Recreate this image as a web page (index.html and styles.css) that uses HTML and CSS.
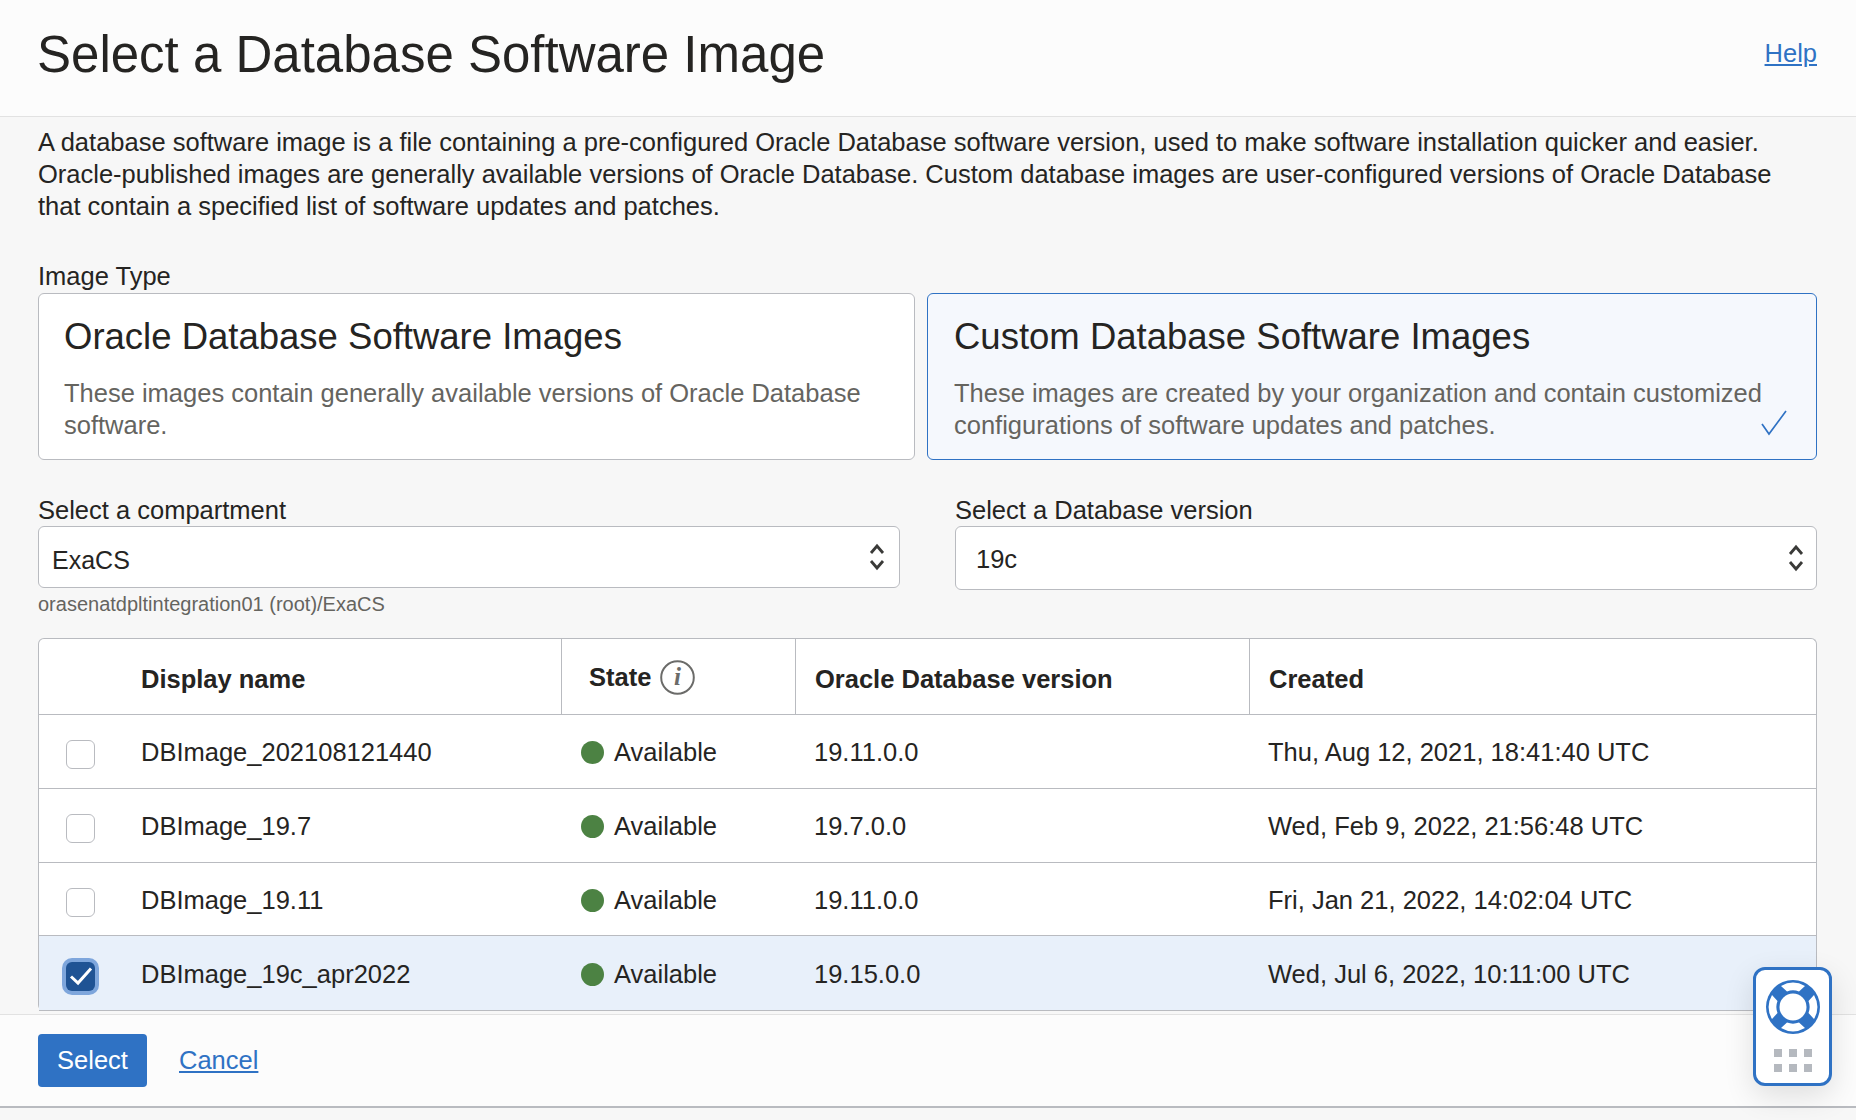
FILE: index.html
```html
<!DOCTYPE html>
<html lang="en">
<head>
<meta charset="utf-8">
<title>Select a Database Software Image</title>
<link rel="stylesheet" href="styles.css">
</head>
<body>
<div class="panel">
  <header class="head">
    <h1 class="title">Select a Database Software Image</h1>
    <a class="link help" href="#">Help</a>
  </header>
  <main class="content">
    <p class="intro">A database software image is a file containing a pre-configured Oracle Database software version, used to make software installation quicker and easier. Oracle-published images are generally available versions of Oracle Database. Custom database images are user-configured versions of Oracle Database that contain a specified list of software updates and patches.</p>
    <div class="label type-label">Image Type</div>
    <div class="cards">
      <div class="card">
        <div class="card-title">Oracle Database Software Images</div>
        <div class="card-text">These images contain generally available versions of Oracle Database software.</div>
      </div>
      <div class="card card-on">
        <div class="card-title">Custom Database Software Images</div>
        <div class="card-text">These images are created by your organization and contain customized configurations of software updates and patches.</div>
        <svg class="card-check" width="28" height="26" viewBox="0 0 28 26"><path d="M2 14 L9 24 L26 1" fill="none" stroke="#2f72c4" stroke-width="1.7"/></svg>
      </div>
    </div>
    <div class="fields">
      <div class="field">
        <div class="label">Select a compartment</div>
        <div class="select select-a"><span class="select-value">ExaCS</span>
          <svg class="updown" width="16" height="28" viewBox="0 0 16 28"><path d="M2 10 L8 3 L14 10 M2 18 L8 25 L14 18" fill="none" stroke="#3a3a38" stroke-width="2.8"/></svg>
        </div>
        <div class="hint">orasenatdpltintegration01 (root)/ExaCS</div>
      </div>
      <div class="field">
        <div class="label">Select a Database version</div>
        <div class="select select-b"><span class="select-value-b">19c</span>
          <svg class="updown" width="16" height="28" viewBox="0 0 16 28"><path d="M2 10 L8 3 L14 10 M2 18 L8 25 L14 18" fill="none" stroke="#3a3a38" stroke-width="2.8"/></svg>
        </div>
      </div>
    </div>
    <table class="grid">
      <colgroup><col class="c1"><col class="c2"><col class="c3"><col class="c4"><col></colgroup>
      <thead>
        <tr>
          <th></th>
          <th>Display name</th>
          <th class="state-h"><span class="state-wrap">State
            <svg class="info" width="35" height="35" viewBox="0 0 35 35"><circle cx="17.5" cy="17.5" r="16.3" fill="none" stroke="#6b6b69" stroke-width="2"/><text x="17.5" y="25" text-anchor="middle" class="info-i">i</text></svg></span></th>
          <th>Oracle Database version</th>
          <th class="created-h">Created</th>
        </tr>
      </thead>
      <tbody>
        <tr>
          <td class="cb-cell"><span class="cb"></span></td>
          <td>DBImage_202108121440</td>
          <td><span class="status"><i class="dot"></i>Available</span></td>
          <td>19.11.0.0</td>
          <td>Thu, Aug 12, 2021, 18:41:40 UTC</td>
        </tr>
        <tr>
          <td class="cb-cell"><span class="cb"></span></td>
          <td>DBImage_19.7</td>
          <td><span class="status"><i class="dot"></i>Available</span></td>
          <td>19.7.0.0</td>
          <td>Wed, Feb 9, 2022, 21:56:48 UTC</td>
        </tr>
        <tr class="row-short">
          <td class="cb-cell"><span class="cb"></span></td>
          <td>DBImage_19.11</td>
          <td><span class="status"><i class="dot"></i>Available</span></td>
          <td>19.11.0.0</td>
          <td>Fri, Jan 21, 2022, 14:02:04 UTC</td>
        </tr>
        <tr class="row-on">
          <td class="cb-cell"><span class="cb cb-on"><svg width="24" height="24" viewBox="0 0 24 24"><path d="M2 12.5 L9 19 L22 4.5" fill="none" stroke="#fff" stroke-width="3"/></svg></span></td>
          <td>DBImage_19c_apr2022</td>
          <td><span class="status"><i class="dot"></i>Available</span></td>
          <td>19.15.0.0</td>
          <td>Wed, Jul 6, 2022, 10:11:00 UTC</td>
        </tr>
      </tbody>
    </table>
  </main>
  <footer class="foot">
    <button class="btn">Select</button>
    <a class="link cancel" href="#">Cancel</a>
  </footer>
</div>
<aside class="widget">
  <svg width="56" height="56" viewBox="0 0 56 56">
    <circle cx="28" cy="28" r="27" fill="#2f72c4"/>
    <g fill="#fff">
      <path d="M16 7 A24.2 24.2 0 0 1 40 7 L34 12.5 A16.6 16.6 0 0 0 22 12.5 Z"/>
      <path d="M16 7 A24.2 24.2 0 0 1 40 7 L34 12.5 A16.6 16.6 0 0 0 22 12.5 Z" transform="rotate(90 28 28)"/>
      <path d="M16 7 A24.2 24.2 0 0 1 40 7 L34 12.5 A16.6 16.6 0 0 0 22 12.5 Z" transform="rotate(180 28 28)"/>
      <path d="M16 7 A24.2 24.2 0 0 1 40 7 L34 12.5 A16.6 16.6 0 0 0 22 12.5 Z" transform="rotate(270 28 28)"/>
      <circle cx="28" cy="28" r="13.5"/>
    </g>
  </svg>
  <div class="dots"><i></i><i></i><i></i><i></i><i></i><i></i></div>
</aside>
</body>
</html>
```
FILE: styles.css
```css
* { box-sizing: border-box; }
html, body { margin: 0; height: 100%; }
body { background: #f7f7f7; color: #252422; font-family: "Liberation Sans", Arial, sans-serif; overflow: hidden; position: relative; }
.panel { display: flex; flex-direction: column; height: 1108px; border-bottom: 2px solid #b9bbc0; }
.head { height: 117px; background: #fcfcfc; border-bottom: 1px solid #e2e2e2; display: flex; justify-content: space-between; padding: 26px 39px 0 37px; }
.title { margin: 0; font-size: 51px; line-height: 58px; font-weight: 400; }
.link { color: #2f72c4; text-decoration: underline; font-size: 25.5px; }
.help { margin-top: 13px; }
.content { flex: 1; padding: 9px 39px 0 38px; }
.intro { margin: 0; font-size: 25.5px; line-height: 32px; }
.label { font-size: 25.5px; line-height: 32px; }
.type-label { margin-top: 38px; }
.cards { display: flex; gap: 12px; margin-top: 1px; }
.card { height: 167px; padding: 21px 26px 0; background: #fff; border: 1px solid #b9bbc0; border-radius: 6px; position: relative; }
.card:first-child { width: 877px; padding-left: 25px; }
.card-on { width: 890px; background: #f5f8fd; border-color: #2f72c4; }
.card-title { font-size: 36.5px; line-height: 44px; }
.card-text { margin-top: 18px; font-size: 25.5px; line-height: 32px; color: #65645f; }
.card-check { position: absolute; right: 28px; bottom: 23px; }
.fields { display: flex; justify-content: space-between; margin-top: 34px; }
.field { width: 862px; }
.select { background: #fff; border: 1px solid #b9bbc0; border-radius: 6px; display: flex; align-items: center; justify-content: space-between; font-size: 25.5px; }
.select-a { height: 62px; padding: 0 14px 0 13px; }
.select-value { padding-top: 6px; font-size: 25px; }
.select-b { height: 64px; padding: 0 12px 0 20px; }
.select-value-b { padding-top: 2px; }
.hint { margin-top: 3px; font-size: 20px; line-height: 26px; color: #65645f; }
.grid { width: 1779px; margin: 21px 0 0; table-layout: fixed; border-collapse: separate; border-spacing: 0; background: #fff; border: 1px solid #b9bbc0; border-bottom: 0; border-radius: 6px; font-size: 25.5px; }
.c1 { width: 102px; } .c2 { width: 420px; } .c3 { width: 234px; } .c4 { width: 454px; }
.grid th { height: 76px; padding: 5px 18px 0; text-align: left; font-size: 25.5px; font-weight: 700; border-bottom: 1px solid #b9bbc0; border-left: 1px solid #b9bbc0; }
.grid th:nth-child(-n+2) { border-left: 0; }
.grid th:nth-child(2), .grid td:nth-child(2) { padding-left: 0; }
.grid td { height: 74px; padding: 2px 18px 0; border-bottom: 1px solid #b9bbc0; }
.grid .row-short td { height: 73px; }
.grid .row-on td { height: 75px; background: #e8f0fa; }
.grid td:nth-child(4), .grid th:nth-child(4), .grid td:last-child, .grid th.created-h { padding-left: 19px; }
.grid td.cb-cell { padding: 6px 0 0 27px; }
.grid th.state-h { padding: 2px 18px 0 27px; }
.state-wrap { display: inline-flex; align-items: center; gap: 9px; }
.info-i { font-family: "Liberation Serif", serif; font-style: italic; font-size: 25px; fill: #6b6b69; }
.status { display: inline-flex; align-items: center; gap: 10px; margin-left: 2px; padding-top: 3px; }
.dot { width: 23px; height: 23px; border-radius: 50%; background: #4c8243; }
.cb { display: block; width: 29px; height: 29px; border: 1px solid #b9bbc0; border-radius: 6px; background: #fff; }
.cb-on { display: flex; align-items: center; justify-content: center; background: #1f5394; border: 0; box-shadow: 0 0 0 4px #7ea6dc; }
.foot { height: 92px; background: #fcfcfc; border-top: 1px solid #e2e2e2; display: flex; align-items: center; gap: 32px; padding: 0 38px; }
.btn { width: 109px; height: 53px; border: 0; border-radius: 4px; background: #2f72c4; color: #fff; font: 25.5px "Liberation Sans", Arial, sans-serif; padding: 0; }
.widget { position: absolute; left: 1753px; top: 967px; width: 79px; height: 119px; background: #fff; border: 3px solid #2f72c4; border-radius: 12px; box-shadow: 0 10px 30px rgba(0,0,0,.12); display: flex; flex-direction: column; align-items: center; padding-top: 9px; }
.dots { display: grid; grid-template-columns: repeat(3, 8px); gap: 7px; margin-top: 14px; }
.dots i { width: 8px; height: 8px; background: #b5b9bf; }
```
